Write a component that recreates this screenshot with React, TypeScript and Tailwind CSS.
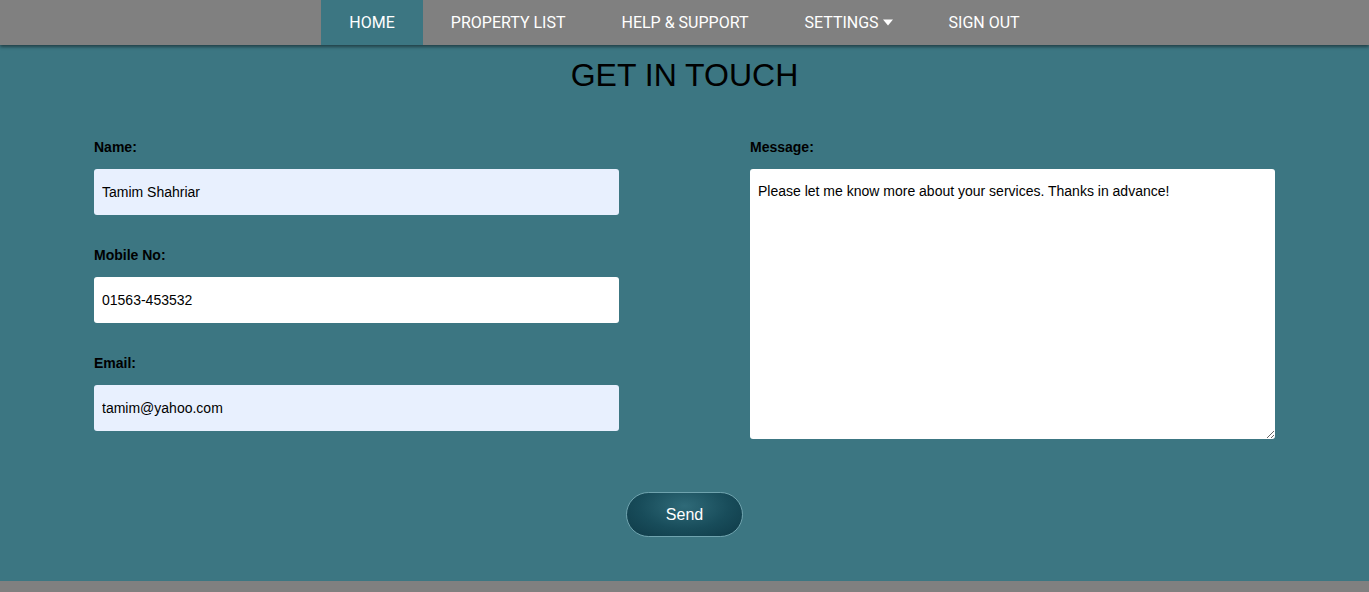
import React from 'react'

const navItems = [
  { label: 'HOME', active: true },
  { label: 'PROPERTY LIST' },
  { label: 'HELP & SUPPORT' },
  { label: 'SETTINGS', caret: true },
  { label: 'SIGN OUT' },
]

function Field({ label, value, autofill }: { label: string; value: string; autofill?: boolean }) {
  return (
    <div className="flex flex-col">
      <label className="text-[14px] leading-[15px] font-bold text-black">{label}</label>
      <input
        defaultValue={value}
        className={`mt-[14px] h-[46px] w-full rounded-[3px] px-2 text-[14px] text-black outline-none ${
          autofill ? 'bg-[#e8f0fe]' : 'bg-white'
        }`}
      />
    </div>
  )
}

export default function App() {
  return (
    <div
      className="flex h-[592px] flex-col bg-[#3c7682]"
      style={{ fontFamily: '"Liberation Sans", Arial, sans-serif' }}
    >
      {/* ナビゲーション */}
      <nav className="relative z-10 flex h-[45px] justify-center bg-[#808080] shadow-[0_2px_3px_rgba(0,0,0,0.45)]">
        {navItems.map((item) => (
          <a
            key={item.label}
            className={`flex items-center px-[28px] text-[16px] text-white ${
              item.active ? 'bg-[#3c7682]' : ''
            }`}
            style={{ fontFamily: 'Roboto, "Liberation Sans", sans-serif' }}
          >
            {item.label}
            {item.caret && (
              <svg width="10" height="7" viewBox="0 0 10 7" className="ml-[4px]">
                <path d="M0 0.5h10L5 6.5z" fill="white" />
              </svg>
            )}
          </a>
        ))}
      </nav>

      <main className="flex flex-1 flex-col">
        <h1 className="mt-[12px] text-center text-[32px] leading-[37px] text-black">GET IN TOUCH</h1>

        <div className="mt-[46px] grid grid-cols-2 gap-x-[131px] px-[94px]">
          <div className="flex flex-col gap-[33px]">
            <Field label="Name:" value="Tamim Shahriar" autofill />
            <Field label="Mobile No:" value="01563-453532" />
            <Field label="Email:" value="tamim@yahoo.com" autofill />
          </div>
          <div className="flex flex-col">
            <label className="text-[14px] leading-[15px] font-bold text-black">Message:</label>
            <textarea
              defaultValue="Please let me know more about your services. Thanks in advance!"
              className="mt-[14px] h-[270px] w-full rounded-[3px] bg-white px-2 py-[14px] text-[14px] leading-[17px] text-black outline-none"
            />
          </div>
        </div>

        <div className="mt-[53px] flex justify-center">
          <button className="h-[45px] w-[117px] rounded-full border border-[#6fa3ae] bg-[radial-gradient(ellipse_at_50%_30%,#2f6a78_0%,#184c5a_55%,#0e3a47_100%)] text-[16px] text-white">
            Send
          </button>
        </div>
      </main>

      <footer className="h-[11px] bg-[#808080]" />
    </div>
  )
}
